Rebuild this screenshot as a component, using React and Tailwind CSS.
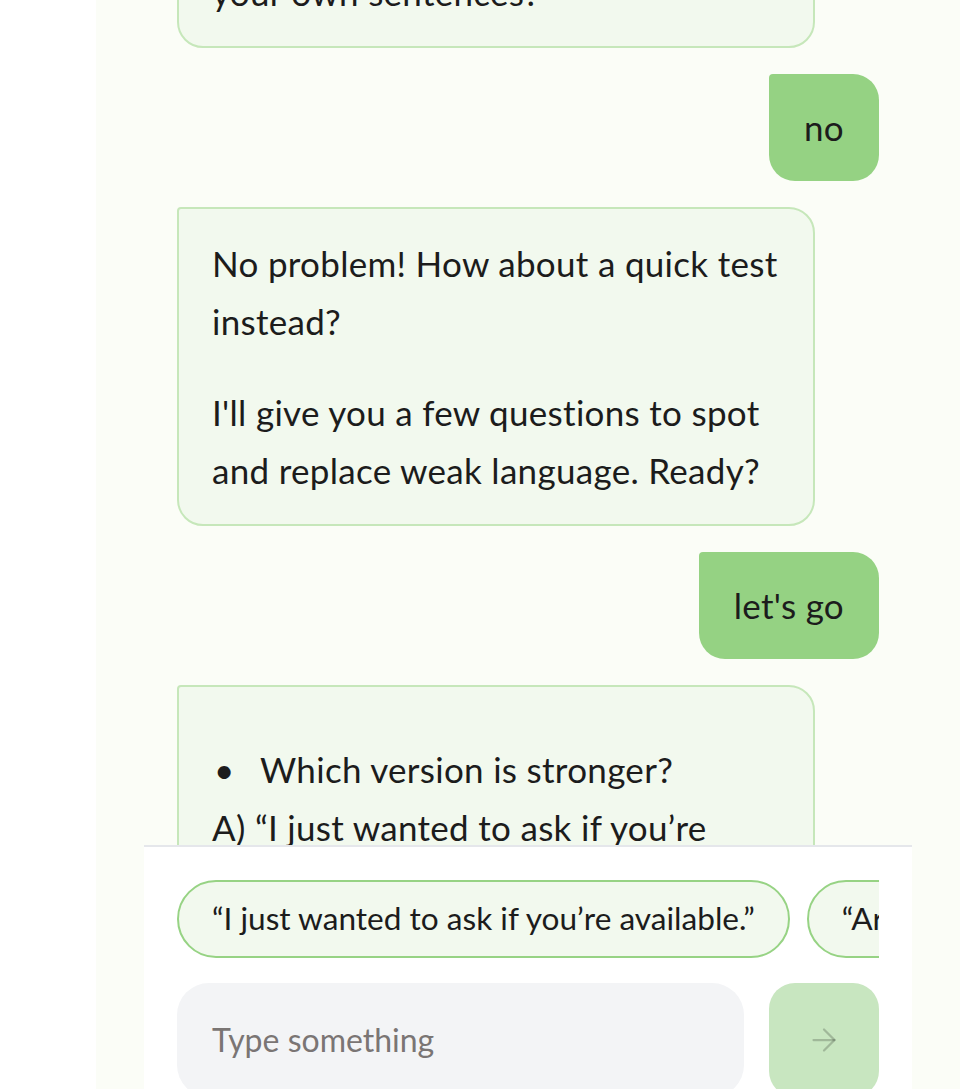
import React from 'react';
import { ArrowRight } from 'lucide-react';

const font = { fontFamily: 'Lato, "Noto Sans", sans-serif' };

function BotBubble({ children }) {
  return (
    <div className="flex justify-start">
      <div className="w-[638px] rounded-[26px] rounded-tl-[4px] border-2 border-[#c6e7ba] bg-[#f2f9ee] px-[33px] py-[25px] text-[35px] leading-[58px] tracking-[0.3px] text-[#1c1c1c]">
        {children}
      </div>
    </div>
  );
}

function UserBubble({ children }) {
  return (
    <div className="flex justify-end">
      <div className="rounded-[26px] rounded-tl-[4px] bg-[#95d283] px-[35px] pt-[24px] pb-[25px] text-[35px] leading-[58px] tracking-[0.3px] text-[#1c1c1c]">
        {children}
      </div>
    </div>
  );
}

export default function App() {
  return (
    <div className="h-[1089px] w-[979px] overflow-hidden bg-white" style={font}>
      <div className="ml-[96px] flex h-full w-[864px] flex-col bg-[#fbfdf7]">
        {/* messages, scrolled */}
        <div className="h-[845px] shrink-0 overflow-hidden px-[81px]">
          <div className="mt-[-122px] flex flex-col gap-[26px]">
            <BotBubble>
              <p>Want to practice rewriting some of</p>
              <p>your own sentences?</p>
            </BotBubble>
            <UserBubble>no</UserBubble>
            <BotBubble>
              <p>No problem! How about a quick test instead?</p>
              <p className="mt-[33px]">I'll give you a few questions to spot and replace weak language. Ready?</p>
            </BotBubble>
            <UserBubble>let's go</UserBubble>
            <BotBubble>
              <ul className="mt-[28px]">
                <li className="flex">
                  <span className="w-[48px] pl-[2px]">•</span>
                  <span>Which version is stronger?</span>
                </li>
              </ul>
              <p>A) “I just wanted to ask if you’re available.”</p>
              <p>B) “Are you available?”</p>
            </BotBubble>
          </div>
        </div>

        {/* composer */}
        <div className="mx-[48px] min-h-0 flex-1 border-t-2 border-[#e5e7eb] bg-white px-[33px] pt-[33px]">
          <div className="flex gap-[17px] overflow-hidden">
            <div className="flex h-[78px] shrink-0 items-center whitespace-nowrap rounded-full border-2 border-[#97d384] bg-[#f2f9ee] px-[33px] text-[31.6px] text-[#1c1c1c]">
              “I just wanted to ask if you’re available.”
            </div>
            <div className="flex h-[78px] shrink-0 items-center whitespace-nowrap rounded-full border-2 border-[#97d384] bg-[#f2f9ee] px-[33px] text-[31.6px] text-[#1c1c1c]">
              “Are you available?”
            </div>
          </div>
          <div className="mt-[25px] flex gap-[25px]">
            <div className="flex h-[114px] flex-1 items-center rounded-[32px] bg-[#f3f4f6] px-[35px] text-[32px] text-[#7a7574]">
              Type something
            </div>
            <button className="flex h-[114px] w-[110px] shrink-0 items-center justify-center rounded-[26px] bg-[#c8e6c0]">
              <ArrowRight size={36} strokeWidth={1.5} className="text-black/20" />
            </button>
          </div>
        </div>
      </div>
    </div>
  );
}
